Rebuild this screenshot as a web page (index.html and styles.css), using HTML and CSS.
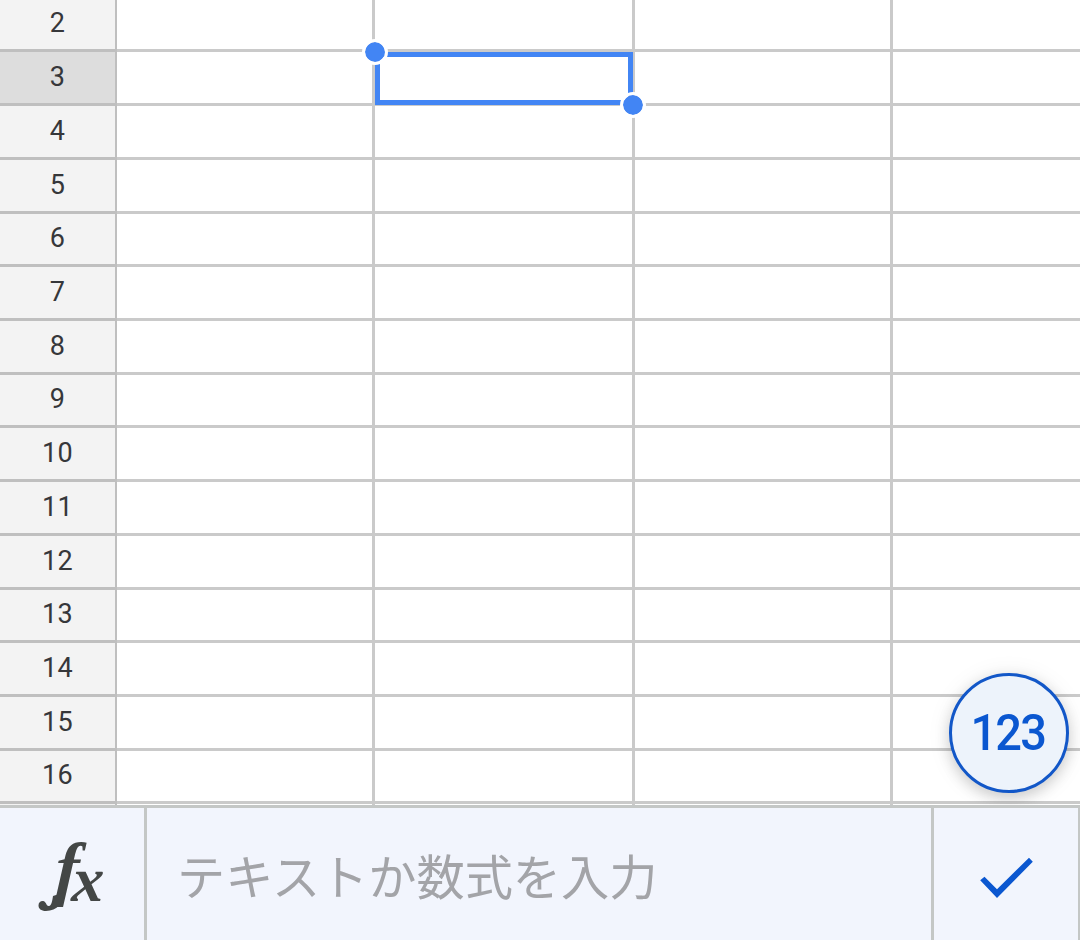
FILE: index.html
```html
<!DOCTYPE html>
<html lang="ja">
<head>
<meta charset="utf-8">
<title>Sheet</title>
<link rel="stylesheet" href="styles.css">
</head>
<body>
<main class="app">
  <section class="sheet">
    <div class="row first"><div class="head">2</div><div class="cell"></div><div class="cell"></div><div class="cell"></div><div class="cell"></div></div>
    <div class="row"><div class="head active">3</div><div class="cell"></div><div class="cell"></div><div class="cell"></div><div class="cell"></div></div>
    <div class="row"><div class="head">4</div><div class="cell"></div><div class="cell"></div><div class="cell"></div><div class="cell"></div></div>
    <div class="row"><div class="head">5</div><div class="cell"></div><div class="cell"></div><div class="cell"></div><div class="cell"></div></div>
    <div class="row short"><div class="head">6</div><div class="cell"></div><div class="cell"></div><div class="cell"></div><div class="cell"></div></div>
    <div class="row"><div class="head">7</div><div class="cell"></div><div class="cell"></div><div class="cell"></div><div class="cell"></div></div>
    <div class="row"><div class="head">8</div><div class="cell"></div><div class="cell"></div><div class="cell"></div><div class="cell"></div></div>
    <div class="row short"><div class="head">9</div><div class="cell"></div><div class="cell"></div><div class="cell"></div><div class="cell"></div></div>
    <div class="row"><div class="head">10</div><div class="cell"></div><div class="cell"></div><div class="cell"></div><div class="cell"></div></div>
    <div class="row"><div class="head">11</div><div class="cell"></div><div class="cell"></div><div class="cell"></div><div class="cell"></div></div>
    <div class="row"><div class="head">12</div><div class="cell"></div><div class="cell"></div><div class="cell"></div><div class="cell"></div></div>
    <div class="row short"><div class="head">13</div><div class="cell"></div><div class="cell"></div><div class="cell"></div><div class="cell"></div></div>
    <div class="row"><div class="head">14</div><div class="cell"></div><div class="cell"></div><div class="cell"></div><div class="cell"></div></div>
    <div class="row"><div class="head">15</div><div class="cell"></div><div class="cell"></div><div class="cell"></div><div class="cell"></div></div>
    <div class="row short"><div class="head">16</div><div class="cell"></div><div class="cell"></div><div class="cell"></div><div class="cell"></div></div>
    <div class="row sliver"><div class="head"></div><div class="cell"></div><div class="cell"></div><div class="cell"></div><div class="cell"></div></div>
    <div class="selection">
      <span class="handle start"></span>
      <span class="handle end"></span>
    </div>
    <div class="keypad">
      <svg width="114" height="114" viewBox="952 676 114 114"><text class="keypad-text" transform="translate(970.6 750) scale(.94 1)" x="0 26.3 52.8" y="0">123</text></svg>
    </div>
  </section>
  <footer class="formula">
    <div class="fx">
      <svg width="144" height="132" viewBox="0 808 144 132">
        <text class="fx-text" transform="translate(54.5 892) skewX(-3)" x="0" y="0">f<tspan class="fx-x" x="17" y="8.5">x</tspan></text>
        <!-- swash under the stem, ending in a round terminal -->
        <path d="M53 896 65.500 892C64 902 57 911 46 911C41 911 38.500 908.500 38.500 905.500C38.500 902.500 40.500 900.800 43 901C46.500 901.300 46 906.500 49 906C51.500 905.500 52.300 901 53 896Z" fill="#444746"/>
      </svg>
    </div>
    <div class="input">テキストか数式を入力</div>
    <div class="confirm">
      <svg width="144" height="132" viewBox="934 808 144 132"><path d="M980.2 880.3 984.5 876.7 997 889.3 1029 857.7 1032.8 861.8 997 898Z" fill="#0b57d0"/></svg>
    </div>
  </footer>
</main>
</body>
</html>
```
FILE: styles.css
```css
body {
  margin: 0;
  background: #fff;
}
.app {
  width: 1080px;
  height: 940px;
  overflow: hidden;
  display: flex;
  flex-direction: column;
}
.sheet {
  position: relative;
  height: 805px;
  flex: none;
}
.row {
  display: grid;
  grid-template-columns: 117px 258px 260px 258px 187px;
  height: 54px;
}
.row.first { height: 52px; }
.row.short { height: 53px; }
.row.sliver { height: 1px; }
.head,
.cell {
  box-sizing: border-box;
  border-bottom: 3px solid #cacaca;
  border-right: 3px solid #cacaca;
}
.cell:last-child { border-right: 0; }
.head {
  background: #f3f3f3;
  border-color: #bfbfbf;
  border-right: 2px solid #bfbfbf;
  color: #36373a;
  font: 27px/30px Roboto, sans-serif;
  letter-spacing: .4px;
  text-align: center;
  display: flex;
  justify-content: center;
  align-items: flex-end;
  padding-bottom: 11px;
}
.head.active { background: #dddddd; }
.sliver .head,
.sliver .cell {
  border-bottom: 0;
  padding: 0;
}
.selection {
  position: absolute;
  left: 375px;
  top: 52px;
  width: 258px;
  height: 53px;
  box-sizing: border-box;
  border: 5px solid #4285f4;
}
.handle {
  position: absolute;
  width: 20px;
  height: 20px;
  border: 3px solid #fff;
  border-radius: 50%;
  background: #4285f4;
  background-clip: padding-box;
}
.handle.start { left: -18px; top: -18px; }
.handle.end { right: -18.4px; bottom: -18px; }
.keypad {
  position: absolute;
  left: 949px;
  top: 673px;
  width: 114px;
  height: 114px;
  border: 3px solid #1257c8;
  border-radius: 50%;
  background: #edf3fb;
  box-shadow: 0 5px 14px rgba(0, 0, 0, .16), 0 2px 24px rgba(0, 0, 0, .08);
}
.keypad svg { display: block; }
.keypad-text {
  font: 500 50px Roboto, sans-serif;
  fill: #0b57d0;
}
.formula {
  position: relative;
  box-sizing: border-box;
  height: 135px;
  border-top: 3px solid #c4c7c6;
  border-right: 2px solid #c4c7c6;
  background: #f2f5fd;
  display: grid;
  grid-template-columns: 147px 787px 144px;
}
.formula svg { display: block; }
.fx,
.input {
  box-sizing: border-box;
  border-right: 3px solid #c4c7c6;
}
.fx-text {
  font: italic bold 71px "Liberation Serif", serif;
  fill: #444746;
}
.fx-x { font-size: 64px; }
.input {
  padding: 31px 0 0 30px;
  color: #a3a4a8;
  font: 48.2px/70px "Noto Sans CJK JP", sans-serif;
  white-space: nowrap;
}
```
